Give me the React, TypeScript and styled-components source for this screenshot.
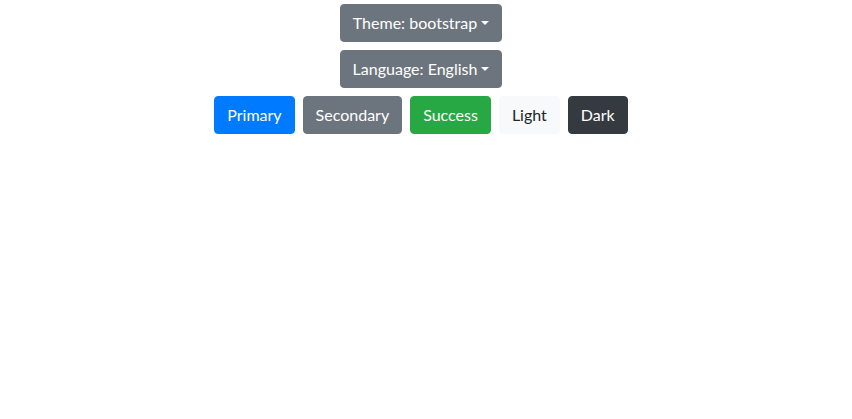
import React from "react";
import styled, { createGlobalStyle } from "styled-components";

const Global = createGlobalStyle`
  html, body { margin: 0; padding: 0; background: #fff; }
  body {
    font-family: Lato, "Segoe UI", Roboto, "Liberation Sans", sans-serif;
    font-size: 16px;
    line-height: 1.5;
    color: #212529;
  }
`;

const Page = styled.div`
  display: flex;
  flex-direction: column;
  align-items: center;
  padding: 0 10px 0 0;
`;

const Row = styled.div`
  display: flex;
  justify-content: center;
  padding: 4px 0;
  gap: 8px;
`;

const palette: Record<string, { bg: string; fg: string }> = {
  primary: { bg: "#007bff", fg: "#fff" },
  secondary: { bg: "#6c757d", fg: "#fff" },
  success: { bg: "#28a745", fg: "#fff" },
  light: { bg: "#f8f9fa", fg: "#212529" },
  dark: { bg: "#343a40", fg: "#fff" },
};

const Button = styled.button<{ $variant: string }>`
  display: inline-flex;
  align-items: center;
  height: 38px;
  box-sizing: border-box;
  padding: 6px 12px;
  border: 1px solid ${(p) => palette[p.$variant].bg};
  border-radius: 4px;
  background: ${(p) => palette[p.$variant].bg};
  color: ${(p) => palette[p.$variant].fg};
  font-family: inherit;
  font-size: 16px;
  line-height: 24px;
  cursor: pointer;
`;

const Caret = styled.span`
  display: inline-block;
  margin-left: 4px;
  margin-top: 0;
  width: 0;
  height: 0;
  border-top: 4.8px solid currentColor;
  border-left: 4.8px solid transparent;
  border-right: 4.8px solid transparent;
`;

export default function App() {
  return (
    <>
      <Global />
      <Page>
        <Row>
          <Button $variant="secondary">
            Theme: bootstrap<Caret />
          </Button>
        </Row>
        <Row>
          <Button $variant="secondary">
            Language: English<Caret />
          </Button>
        </Row>
        <Row>
          <Button $variant="primary">Primary</Button>
          <Button $variant="secondary">Secondary</Button>
          <Button $variant="success">Success</Button>
          <Button $variant="light">Light</Button>
          <Button $variant="dark">Dark</Button>
        </Row>
      </Page>
    </>
  );
}
